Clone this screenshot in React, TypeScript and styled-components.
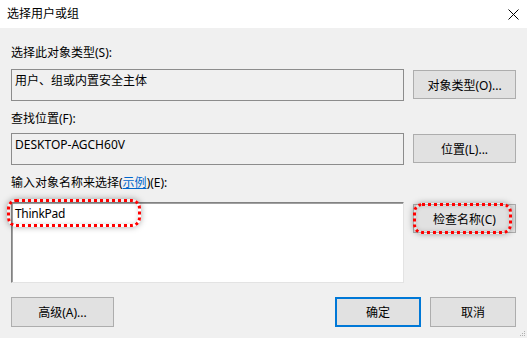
import React from "react";
import styled, { createGlobalStyle } from "styled-components";

const Global = createGlobalStyle`
  html, body { margin: 0; padding: 0; background: #f0f0f0; }
  body { font-family: "Noto Sans", "Noto Sans CJK SC", sans-serif; font-size: 12px; color: #000; }
`;

const Window = styled.div`
  width: 527px;
  height: 338px;
  background: #f0f0f0;
  display: flex;
  flex-direction: column;
  position: relative;
  overflow: hidden;
`;

const TitleBar = styled.div`
  height: 28px;
  background: #fff;
  display: flex;
  align-items: center;
  justify-content: space-between;
  padding: 0 8px 0 7px;
`;

const Title = styled.span`
  font-size: 12px;
  line-height: 16px;
`;

const Body = styled.div`
  display: flex;
  flex-direction: column;
  padding: 0 11px;
`;

const Label = styled.div<{ $top: number; $gap: number }>`
  line-height: 16px;
  margin-top: ${(p) => p.$top}px;
  margin-bottom: ${(p) => p.$gap}px;
`;

const Row = styled.div`
  display: flex;
  align-items: flex-start;
  gap: 9px;
`;

const Field = styled.div`
  width: 393px;
  height: 32px;
  box-sizing: border-box;
  border: 1px solid #8c8c8c;
  background: #f0f0f0;
  padding: 3px 3px;
  line-height: 16px;
`;

const TextArea = styled.div`
  position: relative;
  width: 393px;
  height: 81px;
  box-sizing: border-box;
  background: #fff;
  border-style: solid;
  border-width: 1px;
  border-color: #828282 #e3e3e3 #e3e3e3 #828282;
  box-shadow: inset 1px 1px 0 #a0a0a0;
  padding: 3px 3px;
  line-height: 16px;
  letter-spacing: -0.3px;
`;

const Button = styled.div<{ $w?: number; $h?: number; $primary?: boolean; $mt?: number }>`
  position: relative;
  width: ${(p) => p.$w ?? 103}px;
  height: ${(p) => p.$h ?? 29}px;
  margin-top: ${(p) => p.$mt ?? 0}px;
  box-sizing: border-box;
  background: #e1e1e1;
  border: ${(p) => (p.$primary ? "2px solid #0078d7" : "1px solid #adadad")};
  display: flex;
  align-items: center;
  justify-content: center;
  line-height: 16px;
  padding-top: 2px;
`;

const Footer = styled.div`
  display: flex;
  align-items: center;
  margin-top: 14px;
  gap: 9px;
`;

const Spacer = styled.div`
  flex: 1;
`;

const Link = styled.span`
  color: #0066cc;
  text-decoration: underline;
`;

const Highlight = styled.div<{ $l: number; $t: number; $w: number; $h: number }>`
  position: absolute;
  left: ${(p) => p.$l}px;
  top: ${(p) => p.$t}px;
  width: ${(p) => p.$w}px;
  height: ${(p) => p.$h}px;
  box-sizing: border-box;
  border: 3px dotted #ff0000;
  border-radius: 9px;
  box-shadow: 0 0 6px rgba(0, 0, 0, 0.35), inset 0 0 4px rgba(0, 0, 0, 0.15);
  pointer-events: none;
`;

const Grip = styled.svg`
  position: absolute;
  right: 1px;
  bottom: 1px;
`;

export default function App() {
  return (
    <Window>
      <Global />
      <TitleBar>
        <Title>选择用户或组</Title>
        <svg width="11" height="11" viewBox="0 0 11 11">
          <path d="M0.5 0.5 L10.5 10.5 M10.5 0.5 L0.5 10.5" stroke="#000" strokeWidth="1" />
        </svg>
      </TitleBar>
      <Body>
        <Label $top={17} $gap={8}>选择此对象类型(S):</Label>
        <Row>
          <Field>用户、组或内置安全主体</Field>
          <Button $mt={1}>对象类型(O)...</Button>
        </Row>
        <Label $top={10} $gap={6}>查找位置(F):</Label>
        <Row>
          <Field>DESKTOP-AGCH60V</Field>
          <Button $mt={1}>位置(L)...</Button>
        </Row>
        <Label $top={10} $gap={11}>
          输入对象名称来选择(<Link>示例</Link>)(E):
        </Label>
        <Row>
          <TextArea>
            ThinkPad
            <Highlight $l={-5} $t={-4} $w={134} $h={28} />
          </TextArea>
          <Button $mt={2}>
            检查名称(C)
            <Highlight $l={-1} $t={-2} $w={99} $h={31} />
          </Button>
        </Row>
        <Footer>
          <Button $w={103} $h={30}>高级(A)...</Button>
          <Spacer />
          <Button $w={86} $h={30} $primary>确定</Button>
          <Button $w={86} $h={30}>取消</Button>
        </Footer>
      </Body>
      <Grip width="6" height="6" viewBox="0 0 6 6">
        <rect x="4" y="0" width="1" height="1" fill="#b0b0b0" />
        <rect x="2" y="2" width="1" height="1" fill="#b0b0b0" />
        <rect x="4" y="2" width="1" height="1" fill="#b0b0b0" />
        <rect x="0" y="4" width="1" height="1" fill="#b0b0b0" />
        <rect x="2" y="4" width="1" height="1" fill="#b0b0b0" />
        <rect x="4" y="4" width="1" height="1" fill="#b0b0b0" />
      </Grip>
    </Window>
  );
}
